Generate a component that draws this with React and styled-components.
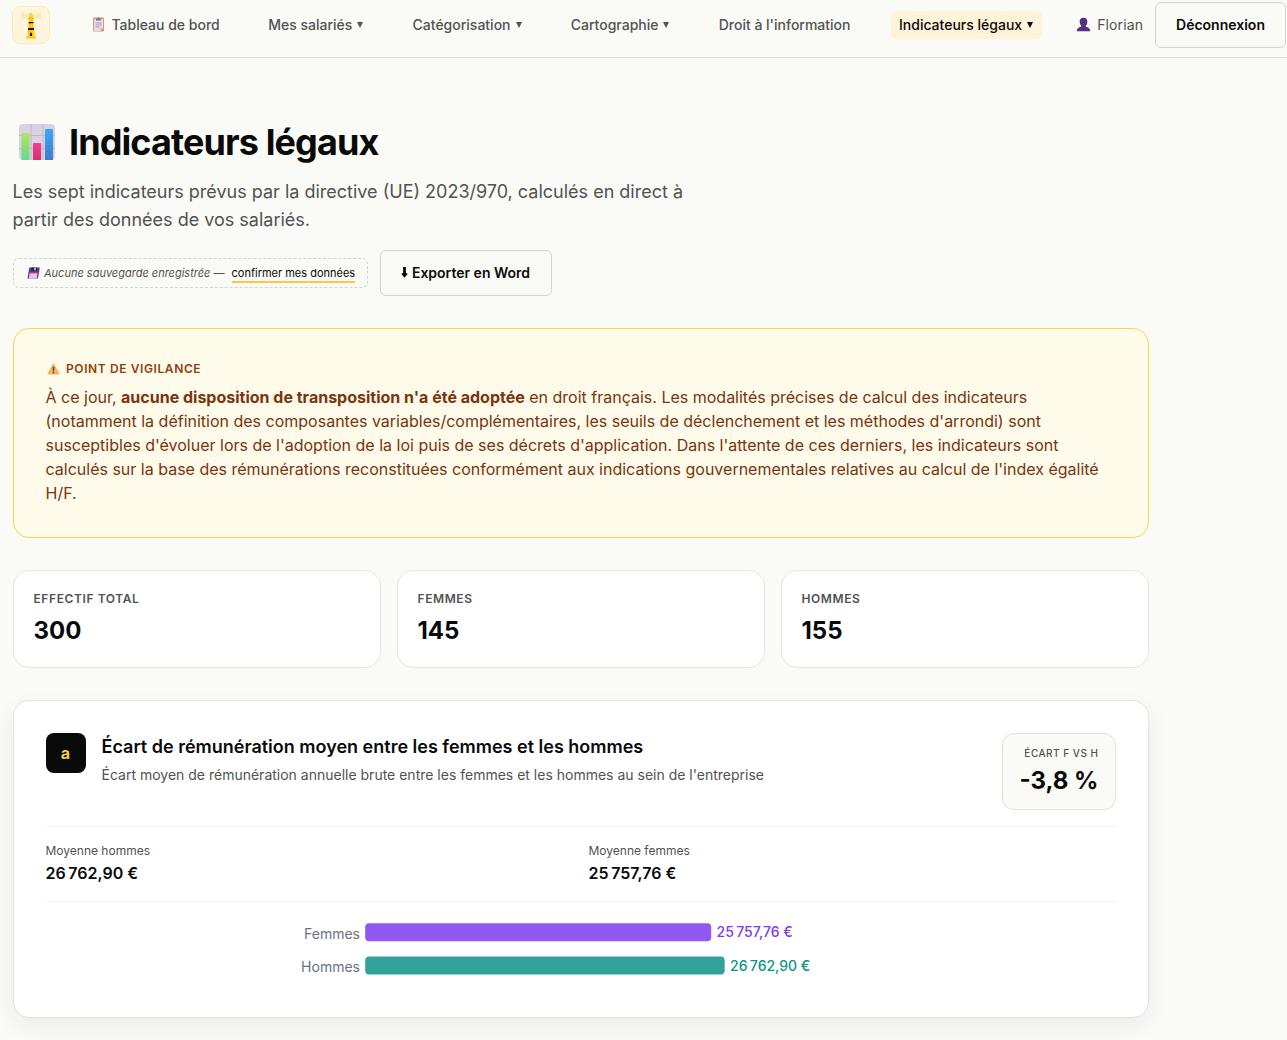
import React from 'react';
import styled, { createGlobalStyle } from 'styled-components';

const GlobalStyles = createGlobalStyle`
* {
    box-sizing: border-box;
}
body {
    margin: 0;
    min-height: 100vh;
    overflow: hidden;
    background: #fafaf6;
    color: #0a0a0a;
    font-family: Inter, "Open Sans", sans-serif;
}
h1, h2, p {
    margin: 0;
}
svg {
    display: block;
    flex: none;
}
`
const Header = styled.header`
display: flex;
align-items: center;
height: 58px;
padding: 2px 1px 9px 12px;
border-bottom: 1px solid #e2e3dc;
`
const Logo = styled.div`
display: flex;
align-items: center;
justify-content: center;
width: 38px;
height: 38px;
border: 1px solid #fbebbd;
border-radius: 8px;
background: #fef5dc;
`
const Nav = styled.nav`
display: flex;
gap: 32.5px;
margin-left: 33.5px;
`
const NavItem = styled.a`
display: flex;
align-items: center;
height: 28px;
padding: 0 8px 1px;
border-radius: 6px;
font-size: 14px;
font-weight: 500;
white-space: nowrap;
color: ${p => p.$active ? '#0a0a0a' : '#525252'};
background: ${p => p.$active ? '#fff3d9' : 'transparent'};
svg {
    margin-right: 7px;
}
`
const Caret = styled.span`
width: 0;
height: 0;
margin: 0 0.7px 0 5px;
border-left: 3.5px solid transparent;
border-right: 3.5px solid transparent;
border-top: 6.5px solid currentColor;
`
const User = styled.div`
display: flex;
align-items: center;
gap: 6px;
margin-left: auto;
margin-right: 12px;
padding-bottom: 1px;
font-size: 14px;
letter-spacing: 0.1px;
color: #525252;
`
const Button = styled.button`
display: flex;
align-items: center;
justify-content: center;
gap: 4px;
width: ${p => p.$width}px;
height: 46px;
padding: 0 0 1px;
border: 1px solid #d4d5cf;
border-radius: 6px;
background: #fafaf6;
color: #0a0a0a;
font-family: inherit;
font-size: 14px;
font-weight: 600;
white-space: nowrap;
`
const Main = styled.main`
display: flex;
flex-direction: column;
width: 1148.5px;
padding: 64px 0 0 12.5px;
`
const Title = styled.h1`
display: flex;
align-items: center;
gap: 14.5px;
height: 41px;
margin-top: -1px;
padding-left: 6px;
font-size: 36px;
font-weight: 700;
letter-spacing: -0.9px;
white-space: nowrap;
`
const Intro = styled.p`
width: 700px;
margin-top: 16px;
font-size: 18px;
line-height: 28px;
color: #525252;
`
const Actions = styled.div`
display: flex;
align-items: center;
gap: 12px;
margin-top: 16px;
`
const SaveStatus = styled.div`
display: flex;
align-items: center;
width: 355px;
height: 30px;
padding-left: 13px;
border: 1px dashed #d4d5cf;
border-radius: 6px;
font-size: 11px;
white-space: nowrap;
color: #525252;
em {
    margin: 0 7px 0 4.5px;
}
`
const ConfirmLink = styled.a`
height: 19px;
line-height: 18px;
border-bottom: 2px solid #fbc93d;
color: #0a0a0a;
`
const Notice = styled.section`
height: 210px;
margin-top: 32px;
padding: 31px 32px;
border: 1px solid #fcd34d;
border-radius: 16px;
background: #fffbeb;
color: #78350f;
`
const NoticeLabel = styled.div`
display: flex;
align-items: center;
gap: 6px;
height: 16px;
padding-left: 1.5px;
font-size: 12px;
font-weight: 600;
letter-spacing: 0.6px;
color: #92400e;
svg {
    margin-top: 2px;
}
`
const NoticeText = styled.p`
margin-top: 9px;
font-size: 16px;
line-height: 24px;
white-space: nowrap;
`
const Stats = styled.section`
display: grid;
grid-template-columns: repeat(3, 1fr);
gap: 16px;
margin-top: 32px;
`
const StatCard = styled.div`
height: 98px;
padding: 20px;
border: 1px solid #e5e7e5;
border-radius: 16px;
background: #fff;
`
const StatLabel = styled.div`
font-size: 12px;
font-weight: 600;
line-height: 16px;
letter-spacing: 0.6px;
color: #525252;
`
const StatValue = styled.div`
margin-top: 6px;
font-size: 24px;
font-weight: 700;
line-height: 36px;
`
const Indicator = styled.section`
height: 318px;
margin-top: 32px;
padding: 32px;
border: 1px solid #e3e4e2;
border-radius: 16px;
background: #fff;
box-shadow: 0 8px 24px rgba(10, 10, 10, 0.06);
`
const IndicatorHead = styled.div`
display: flex;
align-items: flex-start;
height: 94px;
border-bottom: 1px solid #f3f4f1;
`
const Letter = styled.div`
display: flex;
align-items: center;
justify-content: center;
width: 40px;
height: 40px;
margin-right: 16px;
border-radius: 8px;
background: #0a0a0a;
color: #fbcb3f;
font-size: 16px;
font-weight: 700;
`
const IndicatorTitle = styled.h2`
font-size: 18px;
font-weight: 600;
line-height: 28px;
`
const IndicatorText = styled.p`
margin-top: 4px;
font-size: 14px;
line-height: 20px;
color: #525252;
`
const GapBox = styled.div`
display: flex;
flex-direction: column;
align-items: flex-end;
width: 114px;
height: 77px;
margin-left: auto;
padding: 11px 16px 0 0;
border: 1px solid #e2e3dc;
border-radius: 12px;
background: #fafaf6;
`
const GapLabel = styled.div`
font-size: 10px;
font-weight: 500;
line-height: 16px;
letter-spacing: 0.5px;
color: #525252;
`
const GapValue = styled.div`
margin-top: 2px;
font-size: 24px;
font-weight: 700;
line-height: 36px;
`
const Averages = styled.div`
display: grid;
grid-template-columns: 1fr 1fr;
gap: 16px;
height: 75px;
padding-top: 16px;
border-bottom: 1px solid #f3f4f1;
`
const AverageLabel = styled.div`
font-size: 12px;
line-height: 16px;
color: #525252;
`
const AverageValue = styled.div`
margin-top: 2px;
font-size: 16px;
font-weight: 600;
line-height: 24px;
`
const ChartSvg = styled.svg`
font-size: 14px;
`

const navItems = [
    { label: 'Tableau de bord', icon: true },
    { label: 'Mes salariés', menu: true },
    { label: 'Catégorisation', menu: true },
    { label: 'Cartographie', menu: true },
    { label: "Droit à l'information" },
    { label: 'Indicateurs légaux', menu: true, active: true }
]

const stats = [
    { label: 'EFFECTIF TOTAL', value: '300' },
    { label: 'FEMMES', value: '145' },
    { label: 'HOMMES', value: '155' }
]

const averages = [
    { label: 'Moyenne hommes', value: '26\u202f762,90 €' },
    { label: 'Moyenne femmes', value: '25\u202f757,76 €' }
]

const bars = [
    { label: 'Femmes', value: '25\u202f757,76 €', y: 21.2, width: 346, fill: '#9058f0', text: '#7c3aed', labelY: 37, valueY: 35 },
    { label: 'Hommes', value: '26\u202f762,90 €', y: 54.5, width: 359.5, fill: '#31a398', text: '#0d9488', labelY: 70, valueY: 69 }
]

const Lighthouse = () => (
    <svg width="22" height="30" viewBox="0 0 22 30">
        <path d="M1 2l8 3v2l-8 3zM21 2l-8 3v2l8 3z" fill="#fdeab0" />
        <path d="M9 4.500Q11 .5 13 4.500V8H9z" fill="#fdd04a" />
        <path d="M8 7.500h6v2H8z" fill="#f5b90a" />
        <path d="M8.800 9.500h4.400l1.400 17.500H7.400z" fill="#ffc60a" />
        <path d="M8.700 12h4.600l.1 1.300H8.600zM8.200 18h5.600l.2 2H8z" fill="#17140a" />
        <path d="M10 23.200q1-1.200 2 0V26h-2z" fill="#17140a" />
        <path d="M6 26.500h10v2H6z" fill="#ffc60a" />
    </svg>
)

const Clipboard = () => (
    <svg width="13" height="15" viewBox="0 0 13 15">
        <rect x="1" y=".5" width="11" height="14" rx="1" fill="#dc9670" />
        <path d="M2 2h9v9l-2.500 3H2z" fill="#e4dcf0" />
        <path d="M11 11l-2.500 3v-3z" fill="#f5a66d" />
        <path d="M4 1.500h1.500q1-2 2 0H9v2H4z" fill="#7d7389" />
        <path d="M3.500 6h6M3.500 8h6M3.500 10h4" stroke="#a99dbd" />
    </svg>
)

const Person = () => (
    <svg width="15" height="15" viewBox="0 0 15 15">
        <path d="M7.500.8c2.500 0 4 1.500 3.800 4.100-.1 1.800-.7 2.900-1.500 3.700v1.200c2.700.6 4.400 1.700 4.500 4.500H.7c.1-2.800 1.800-3.900 4.500-4.500V8.600c-.8-.8-1.400-1.900-1.500-3.700C3.500 2.300 5 .8 7.500.8z" fill="#533087" />
    </svg>
)

const BarsEmoji = () => (
    <svg width="36" height="36" viewBox="0 0 36 36">
        <defs>
            <linearGradient id="green" x1="0" y1="0" x2="0" y2="1">
                <stop stopColor="#b5e35d" />
                <stop offset="1" stopColor="#62dc8e" />
            </linearGradient>
            <linearGradient id="pink" x1="0" y1="0" x2="0" y2="1">
                <stop stopColor="#f53b97" />
                <stop offset="1" stopColor="#dc3060" />
            </linearGradient>
            <linearGradient id="blue" x1="0" y1="0" x2="0" y2="1">
                <stop stopColor="#38aafa" />
                <stop offset="1" stopColor="#3f79cf" />
            </linearGradient>
        </defs>
        <rect width="36" height="36" rx="4" fill="#dad2e2" />
        <path d="M12 0v36M24 0v36M0 11.500h36M0 24.500h36" stroke="#c0b6ca" />
        <path d="M2.500 36V10a1 1 0 011-1h6a1 1 0 011 1v26z" fill="url(#green)" />
        <path d="M14 36V20a1 1 0 011-1h6a1 1 0 011 1v16z" fill="url(#pink)" />
        <path d="M26 36V6a1 1 0 011-1h6a1 1 0 011 1v30z" fill="url(#blue)" />
    </svg>
)

const Floppy = () => (
    <svg width="13" height="12" viewBox="0 0 13 12">
        <path d="M2.300.5h10.500L11 11.500H.5z" fill="#5b3a8e" />
        <path d="M4.500.5h5.800L9.800 4H4z" fill="#352251" />
        <path d="M7.500.5h1.600l-.6 2.700H7z" fill="#d9cbe9" />
        <path d="M2.700 6h7.800l-.8 5.500H1.800z" fill="#dfc9ed" />
        <path d="M2.800 5.300h7.900l-.2 1.300H2.600z" fill="#df3c78" />
    </svg>
)

const Warning = () => (
    <svg width="13" height="12" viewBox="0 0 13 12">
        <path d="M5.700 1.200q.8-1.200 1.600 0l5 9q.5 1.300-.8 1.300h-10q-1.300 0-.8-1.300z" fill="#fbb45c" />
        <path d="M6.500 3.800v4" stroke="#5f3a35" strokeWidth="1.500" />
        <circle cx="6.500" cy="9.500" r=".9" fill="#5f3a35" />
    </svg>
)

const DownArrow = () => (
    <svg width="7" height="11" viewBox="0 0 7 11">
        <path d="M2.100 0h2.800v6.300h1.500v1L3.500 10.800.6 7.300v-1h1.500z" fill="#0a0a0a" />
    </svg>
)

const Chart = () => (
    <ChartSvg width="1070" height="100">
        {bars.map(bar =>
            <g key={bar.label}>
                <text x="314" y={bar.labelY} textAnchor="end" fill="#6b7280">{bar.label}</text>
                <rect x="319.200" y={bar.y} width={bar.width} height="18" rx="4" fill={bar.fill} />
                <text x={bar.width + 324.500} y={bar.valueY} fontWeight="500" fill={bar.text}>{bar.value}</text>
            </g>
        )}
    </ChartSvg>
)

export default function App() {
    return (
        <>
            <GlobalStyles />
            <Header>
                <Logo><Lighthouse /></Logo>
                <Nav>
                    {navItems.map(item =>
                        <NavItem key={item.label} $active={item.active}>
                            {item.icon && <Clipboard />}
                            {item.label}
                            {item.menu && <Caret />}
                        </NavItem>
                    )}
                </Nav>
                <User><Person />Florian</User>
                <Button $width={131}>Déconnexion</Button>
            </Header>
            <Main>
                <Title><BarsEmoji />Indicateurs légaux</Title>
                <Intro>
                    Les sept indicateurs prévus par la directive (UE) 2023/970, calculés en direct à<br />
                    partir des données de vos salariés.
                </Intro>
                <Actions>
                    <SaveStatus>
                        <Floppy />
                        <em>Aucune sauvegarde enregistrée —</em>
                        <ConfirmLink>confirmer mes données</ConfirmLink>
                    </SaveStatus>
                    <Button $width={172}><DownArrow />Exporter en Word</Button>
                </Actions>
                <Notice>
                    <NoticeLabel><Warning />POINT DE VIGILANCE</NoticeLabel>
                    <NoticeText>
                        À ce jour, <strong>aucune disposition de transposition n'a été adoptée</strong> en droit français. Les modalités précises de calcul des indicateurs<br />
                        (notamment la définition des composantes variables/complémentaires, les seuils de déclenchement et les méthodes d'arrondi) sont<br />
                        susceptibles d'évoluer lors de l'adoption de la loi puis de ses décrets d'application. Dans l'attente de ces derniers, les indicateurs sont<br />
                        calculés sur la base des rémunérations reconstituées conformément aux indications gouvernementales relatives au calcul de l'index égalité<br />
                        H/F.
                    </NoticeText>
                </Notice>
                <Stats>
                    {stats.map(item =>
                        <StatCard key={item.label}>
                            <StatLabel>{item.label}</StatLabel>
                            <StatValue>{item.value}</StatValue>
                        </StatCard>
                    )}
                </Stats>
                <Indicator>
                    <IndicatorHead>
                        <Letter>a</Letter>
                        <div>
                            <IndicatorTitle>Écart de rémunération moyen entre les femmes et les hommes</IndicatorTitle>
                            <IndicatorText>Écart moyen de rémunération annuelle brute entre les femmes et les hommes au sein de l'entreprise</IndicatorText>
                        </div>
                        <GapBox>
                            <GapLabel>ÉCART F VS H</GapLabel>
                            <GapValue>-3,8 %</GapValue>
                        </GapBox>
                    </IndicatorHead>
                    <Averages>
                        {averages.map(item =>
                            <div key={item.label}>
                                <AverageLabel>{item.label}</AverageLabel>
                                <AverageValue>{item.value}</AverageValue>
                            </div>
                        )}
                    </Averages>
                    <Chart />
                </Indicator>
            </Main>
        </>
    )
}
